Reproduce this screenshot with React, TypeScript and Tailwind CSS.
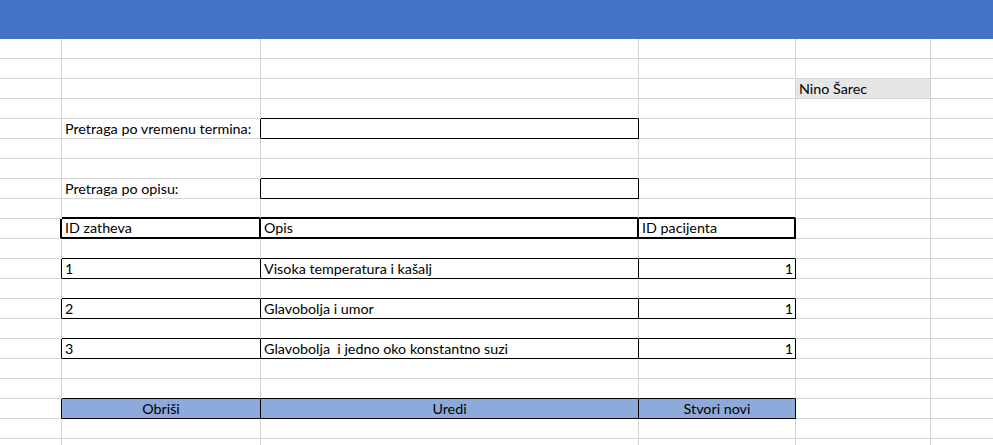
type Cell = {
  text?: string
  align?: "left" | "right" | "center"
  bg?: "gray" | "blue"
  box?: 1 | 2
}

const ROWS = 21
const COLS = 6

// sheet content, keyed by "row-col"
const cells: Record<string, Cell> = {
  "2-4": { text: "Nino Šarec", bg: "gray" },
  "4-1": { text: "Pretraga po vremenu termina:" },
  "4-2": { box: 1 },
  "7-1": { text: "Pretraga po opisu:" },
  "7-2": { box: 1 },
  "9-1": { text: "ID zatheva", box: 2 },
  "9-2": { text: "Opis", box: 2 },
  "9-3": { text: "ID pacijenta", box: 2 },
  "11-1": { text: "1", box: 1 },
  "11-2": { text: "Visoka temperatura i kašalj", box: 1 },
  "11-3": { text: "1", align: "right", box: 1 },
  "13-1": { text: "2", box: 1 },
  "13-2": { text: "Glavobolja i umor", box: 1 },
  "13-3": { text: "1", align: "right", box: 1 },
  "15-1": { text: "3", box: 1 },
  "15-2": { text: "Glavobolja  i jedno oko konstantno suzi", box: 1 },
  "15-3": { text: "1", align: "right", box: 1 },
  "18-1": { text: "Obriši", align: "center", bg: "blue", box: 1 },
  "18-2": { text: "Uredi", align: "center", bg: "blue", box: 1 },
  "18-3": { text: "Stvori novi", align: "center", bg: "blue", box: 1 },
}

const get = (r: number, c: number): Cell => cells[`${r}-${c}`] ?? {}
const boxOf = (r: number, c: number) => get(r, c).box ?? 0

function rightCls(w: number) {
  if (w === 2) return "border-r-2 border-r-black"
  if (w === 1) return "border-r border-r-black"
  return "border-r border-r-[#d4d4d4]"
}

function bottomCls(w: number) {
  if (w === 2) return "border-b-2 border-b-black"
  if (w === 1) return "border-b border-b-black"
  return "border-b border-b-[#d4d4d4]"
}

function SheetCell({ r, c }: { r: number; c: number }) {
  const cell = get(r, c)
  const right = c === COLS - 1 ? "" : rightCls(Math.max(boxOf(r, c), boxOf(r, c + 1)))
  const bottom = bottomCls(Math.max(boxOf(r, c), boxOf(r + 1, c)))
  const bg =
    cell.bg === "gray" ? "bg-[#e7e6e6]" : cell.bg === "blue" ? "bg-[#8ea9db]" : "bg-white"
  const align =
    cell.align === "right"
      ? "justify-end pr-[2px]"
      : cell.align === "center"
        ? "justify-center"
        : "justify-start pl-[3px]"

  return (
    <div
      className={`h-[20px] box-border flex items-end overflow-visible whitespace-pre ${right} ${bottom} ${bg} ${align}`}
    >
      {cell.text && <span className="leading-[18px]">{cell.text}</span>}
    </div>
  )
}

export default function App() {
  return (
    <div
      className="w-[993px] h-[445px] overflow-hidden bg-white text-black text-[14.3px]"
      style={{ fontFamily: "Lato, 'Open Sans', sans-serif" }}
    >
      <div className="h-[39px] bg-[#4472c4]" />
      <div className="grid grid-cols-[62px_199px_378px_157px_135px_1fr]">
        {Array.from({ length: ROWS }).map((_, r) =>
          Array.from({ length: COLS }).map((_, c) => (
            <SheetCell key={`${r}-${c}`} r={r} c={c} />
          ))
        )}
      </div>
    </div>
  )
}
